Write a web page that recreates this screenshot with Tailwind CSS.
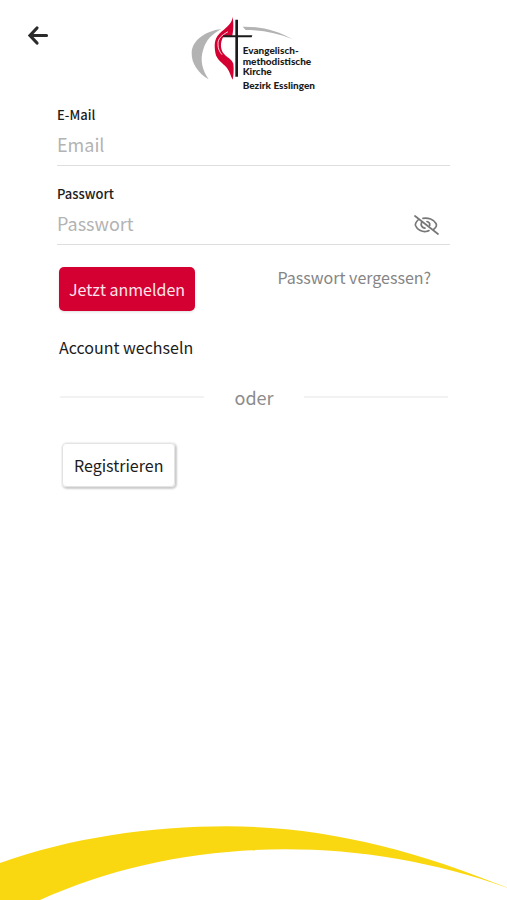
<!DOCTYPE html>
<html lang="de">
<head>
<meta charset="utf-8">
<meta name="viewport" content="width=device-width, initial-scale=1">
<title>Anmelden</title>
<script src="https://cdn.jsdelivr.net/npm/@tailwindcss/browser@4"></script>
</head>
<body class="flex min-h-screen flex-col bg-white font-['Noto_Sans_CJK_SC','Noto_Sans',sans-serif] text-[#1c1c1c]">
<header class="grid grid-cols-[1fr_130px_1fr] items-start pt-[15px]">
  <button type="button" aria-label="Zurück" class="ml-[26px] mt-2 flex size-6 items-center justify-center">
    <svg class="size-6" viewBox="0 0 24 24" fill="none" stroke="#2b2b2b" stroke-width="3.2" stroke-linecap="round"><path d="M11 5 4 12.500 11 20M4.500 12.500H20.500"/></svg>
  </button>
  <svg class="h-20 w-[130px]" viewBox="27 30 390 240" role="img" aria-label="Evangelisch-methodistische Kirche Bezirk Esslingen">
    <path fill="#b3b3b3" d="M124 72C74 78 36 108 35 143C34 176 55 204 86 223C67 195 59 166 70 133C78 105 96 87 124 72Z"/>
    <path fill="#b3b3b3" d="M188 65C245 64 294 78 338 103C293 84 246 75 197 75Z"/>
    <path fill="#d50032" d="M158 35C157 56 134 71 118 86C102 102 103 121 106 143C110 166 128 172 141 189C150 201 151 212 158 224C161 209 162 192 160 176C155 160 139 157 129 143C121 130 121 112 129 97L157 92C161 72 161 54 158 35Z"/>
    <path fill="none" stroke="#fff" stroke-width="2.500" d="M144 80C124 92 113 100 114 119C114 130 118 140 126 149"/>
    <path fill="#1b1b1b" d="M166 44h8v171h-8zM130 91h87l-2 6h-88z"/>
    <g fill="#1b1b1b" font-family="Lato, 'Open Sans', sans-serif" font-weight="900" font-size="30">
      <text x="188" y="148">Evangelisch-</text>
      <text x="188" y="180">methodistische</text>
      <text x="188" y="211">Kirche</text>
      <text x="188" y="253">Bezirk Esslingen</text>
    </g>
  </svg>
</header>
<main class="px-[57px] pt-2">
  <form>
    <label for="email" class="block text-[13px] leading-6 font-medium">E-Mail</label>
    <div class="flex h-[39px] items-center border-b border-[#dedede]">
      <input id="email" type="email" placeholder="Email" class="w-full bg-transparent pb-1 text-lg outline-none placeholder:text-[#b3b3b3]">
    </div>
    <label for="password" class="mt-4 block text-[13px] leading-6 font-medium">Passwort</label>
    <div class="flex h-[39px] items-center border-b border-[#dedede]">
      <input id="password" type="password" placeholder="Passwort" class="w-full min-w-0 flex-1 bg-transparent pb-1 text-lg outline-none placeholder:text-[#b3b3b3]">
      <button type="button" aria-label="Passwort anzeigen" class="mr-3 flex size-6 items-center justify-center">
        <svg class="size-6 overflow-visible" viewBox="0 0 24 24" fill="none" stroke="#777" stroke-width="1.700" stroke-linecap="round"><path d="M1 3 24 21M4.500 6.500C2 9 1 11 1.500 12.500C3 16.500 8 19 12 18.500C13 18.400 14 18.200 15 17.600M9 5.300C14 4.300 20 6.500 22 10.500C23 12.500 22 14.500 20 16M7.500 9.500C6.500 12 8 15 11 15.200M13 8.500C15 9 16 10.500 15.700 12.300"/></svg>
      </button>
    </div>
    <div class="flex items-start justify-between pt-[22px] pr-[19px] pl-[2px]">
      <button type="submit" class="h-11 rounded-[5px] bg-[#d50032] px-[10px] text-base text-[#ffe5ea] shadow-sm">Jetzt anmelden</button>
      <a href="#" class="text-base leading-5 text-[#858585]">Passwort vergessen?</a>
    </div>
    <a href="#" class="mt-[22px] ml-[2px] inline-block text-base leading-7">Account wechseln</a>
    <div class="mt-[22px] mr-[2px] ml-[3px] flex items-center gap-[30px] text-lg leading-7 text-[#8c8c8c]">
      <span class="h-0.5 flex-1 bg-[#f2f2f2]"></span>oder<span class="h-0.5 flex-1 bg-[#f2f2f2]"></span>
    </div>
    <button type="button" class="mt-8 ml-[5px] h-11 rounded-[4px] border border-[#e3e3e3] px-[11px] text-base shadow-[1px_1px_2px_1px_#cccccc]">Registrieren</button>
  </form>
</main>
<svg class="mt-auto block w-full" viewBox="0 0 507 100" aria-hidden="true"><path fill="#fad811" d="M0 63C70 38 150 26.300 227 26.300C325 26.300 415 50 508 88C435 62 360 49.300 285 49.300C200 49.300 115 66 40 100H0Z"/></svg>
</body>
</html>
